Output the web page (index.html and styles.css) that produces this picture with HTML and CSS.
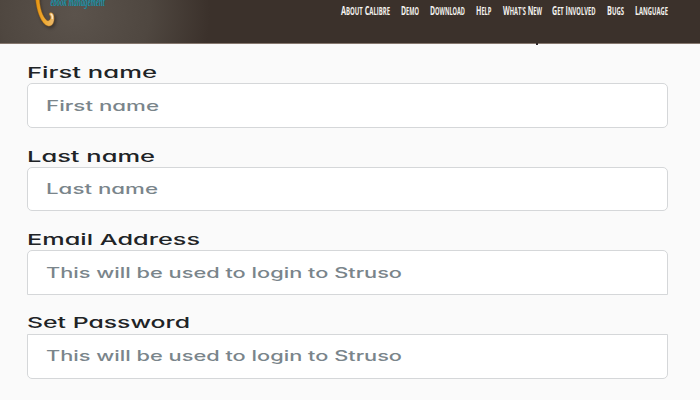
FILE: index.html
```
<!DOCTYPE html>
<html lang="en">
<head>
<meta charset="utf-8">
<title>Sign up</title>
<link rel="stylesheet" href="styles.css">
</head>
<body>
<header class="header">
  <svg class="logo" width="130" height="43" viewBox="0 0 130 43">
    <defs>
      <linearGradient id="gold" x1="0" y1="0" x2="1" y2="0">
        <stop offset="0" stop-color="#e5930f"/><stop offset=".5" stop-color="#f0ab33"/><stop offset="1" stop-color="#e9b970"/>
      </linearGradient>
    </defs>
    <path class="logo-shadow" d="M38.500 -3C38.500 11 43 24 49.500 26.500C54 27 55 20 53.500 15.500"/>
    <path class="logo-hook" d="M35.500 -2C36 6 38.500 19 45.500 25C49.500 27.800 54.200 25.500 54.200 18.500C54.200 15.500 53.500 12.700 50.700 12.500C48.800 12.600 48.600 15 50.200 15.900C51.200 18.500 49.500 21.500 47 20.500C42.500 17 39.500 7 39.500 -2Z"/>
    <path class="logo-shine" d="M50.700 13.800Q53 15 52.200 19"/>
    <text class="tagline" x="50.500" y="6.300" textLength="54" lengthAdjust="spacingAndGlyphs">ebook management</text>
  </svg>
  <nav class="nav">
    <svg width="49" height="20"><text y="15" textLength="49" lengthAdjust="spacingAndGlyphs">A<tspan class="sc">bout</tspan> C<tspan class="sc">alibre</tspan></text></svg>
    <svg width="18" height="20"><text y="15" textLength="18" lengthAdjust="spacingAndGlyphs">D<tspan class="sc">emo</tspan></text></svg>
    <svg width="35" height="20"><text y="15" textLength="35" lengthAdjust="spacingAndGlyphs">D<tspan class="sc">ownload</tspan></text></svg>
    <svg width="15.500" height="20"><text y="15" textLength="15.500" lengthAdjust="spacingAndGlyphs">H<tspan class="sc">elp</tspan></text></svg>
    <svg width="39" height="20"><text y="15" textLength="39" lengthAdjust="spacingAndGlyphs">W<tspan class="sc">hat's</tspan> N<tspan class="sc">ew</tspan></text></svg>
    <svg width="43.500" height="20"><text y="15" textLength="43.500" lengthAdjust="spacingAndGlyphs">G<tspan class="sc">et</tspan> I<tspan class="sc">nvolved</tspan></text></svg>
    <svg width="17" height="20"><text y="15" textLength="17" lengthAdjust="spacingAndGlyphs">B<tspan class="sc">ugs</tspan></text></svg>
    <svg width="33" height="20"><text y="15" textLength="33" lengthAdjust="spacingAndGlyphs">L<tspan class="sc">anguage</tspan></text></svg>
  </nav>
  <i class="speck"></i>
</header>
<main class="form">
  <div class="group">
    <svg class="label" width="200" height="23"><text x="0" y="17.700" textLength="130" lengthAdjust="spacingAndGlyphs">First name</text></svg>
    <div class="field"><svg class="hint" width="400" height="42"><text x="0" y="26.500" textLength="113" lengthAdjust="spacingAndGlyphs">First name</text></svg></div>
  </div>
  <div class="group">
    <svg class="label" width="200" height="23"><text x="0" y="17.800" textLength="128" lengthAdjust="spacingAndGlyphs">Last name</text></svg>
    <div class="field"><svg class="hint" width="400" height="42"><text x="0" y="26.300" textLength="112" lengthAdjust="spacingAndGlyphs">Last name</text></svg></div>
  </div>
  <div class="group">
    <svg class="label" width="200" height="23"><text x="0" y="18" textLength="173" lengthAdjust="spacingAndGlyphs">Email Address</text></svg>
    <div class="field square-bottom"><svg class="hint" width="400" height="42"><text x="0" y="26.500" textLength="356" lengthAdjust="spacingAndGlyphs">This will be used to login to Struso</text></svg></div>
  </div>
  <div class="group">
    <svg class="label" width="200" height="23"><text x="0" y="17.300" textLength="163" lengthAdjust="spacingAndGlyphs">Set Password</text></svg>
    <div class="field square-top"><svg class="hint" width="400" height="42"><text x="0" y="26.300" textLength="356" lengthAdjust="spacingAndGlyphs">This will be used to login to Struso</text></svg></div>
  </div>
</main>
</body>
</html>
```
FILE: styles.css
```
* { box-sizing: border-box; }
body {
  margin: 0;
  height: 400px;
  overflow: hidden;
  background: #fafafa;
  font-family: Inter, "Liberation Sans", sans-serif;
}
svg { display: block; overflow: visible; flex: none; }
.header {
  position: relative;
  display: flex;
  justify-content: space-between;
  height: 44px;
  padding-right: 32.300px;
  border-bottom: 1px solid #85776e;
  background: radial-gradient(ellipse 135px 130px at 75px 14px, #5b534c, #4f4740 55%, #3b312b);
}
.logo-shadow { fill: none; stroke: #211b17; stroke-width: 4; opacity: .5; filter: blur(1.5px); }
.logo-hook { fill: url(#gold); stroke: #8b5513; stroke-width: .4; }
.logo-shine { fill: none; stroke: #ffe9c9; stroke-width: 1.3; }
.tagline {
  font: italic bold 12px "Liberation Serif", serif;
  fill: #1691a8;
}
.nav {
  display: flex;
  gap: 10.900px;
  font: bold 12px "Open Sans", sans-serif;
  fill: #f4f2ee;
}
.sc { font-size: 9.800px; text-transform: uppercase; }
.speck {
  position: absolute;
  left: 536px;
  top: 43px;
  width: 2px;
  height: 2px;
  background: #2d2729;
}
.form { padding: 16.300px 32px 0 26.500px; }
.group { height: 83.600px; }
.label {
  font-size: 15px;
  font-weight: 450;
  font-feature-settings: "cv11";
  fill: #202326;
}
.field {
  height: 44.500px;
  padding-left: 18px;
  border: 1px solid #d5d7d9;
  border-radius: 5px;
  background: #fff;
}
.square-bottom { border-radius: 5px 5px 0 0; }
.square-top { border-radius: 0 0 5px 5px; }
.hint {
  font-size: 14.200px;
  font-weight: 450;
  font-feature-settings: "cv11";
  fill: #7a858b;
}
```
